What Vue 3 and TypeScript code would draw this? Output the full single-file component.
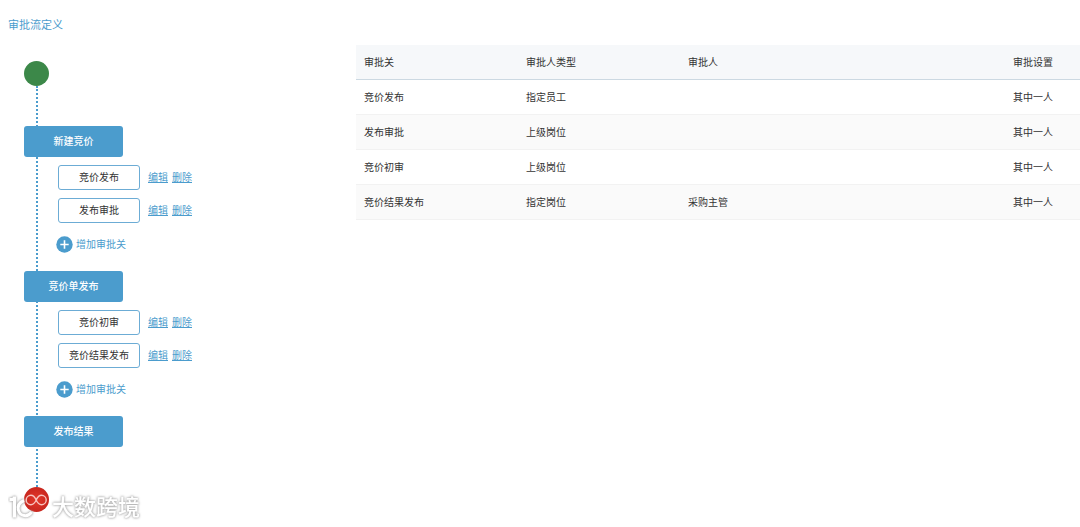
<script setup lang="ts">
interface Stage {
  name: string
  gates: string[]
}

interface Approval {
  gate: string
  type: string
  approver: string
  rule: string
}

const stages: Stage[] = [
  { name: '新建竞价', gates: ['竞价发布', '发布审批'] },
  { name: '竞价单发布', gates: ['竞价初审', '竞价结果发布'] },
  { name: '发布结果', gates: [] },
]

const approvals: Approval[] = [
  { gate: '竞价发布', type: '指定员工', approver: '', rule: '其中一人' },
  { gate: '发布审批', type: '上级岗位', approver: '', rule: '其中一人' },
  { gate: '竞价初审', type: '上级岗位', approver: '', rule: '其中一人' },
  { gate: '竞价结果发布', type: '指定岗位', approver: '采购主管', rule: '其中一人' },
]
</script>

<template>
  <main class="page">
    <h1 class="title">审批流定义</h1>
    <div class="content">
      <section class="flow">
        <span class="dot start"></span>
        <div class="track">
          <div v-for="stage in stages" :key="stage.name" class="stage">
            <button type="button" class="node">{{ stage.name }}</button>
            <template v-if="stage.gates.length">
              <ul class="gates">
                <li v-for="gate in stage.gates" :key="gate" class="gate">
                  <button type="button" class="gate-name">{{ gate }}</button>
                  <a href="#">编辑</a>
                  <a href="#">删除</a>
                </li>
              </ul>
              <button type="button" class="add">
                <svg width="17" height="17" viewBox="0 0 17 17" aria-hidden="true">
                  <circle cx="8.5" cy="8.5" r="8.2" fill="#4b9ccd" />
                  <path d="M8.5 4.3v8.4M4.3 8.5h8.4" stroke="#fff" stroke-width="1.6" />
                </svg>
                <span>增加审批关</span>
              </button>
            </template>
          </div>
        </div>
        <span class="dot end"></span>
      </section>

      <section class="list">
        <table>
          <colgroup>
            <col class="col" />
            <col class="col" />
            <col />
            <col class="col-rule" />
          </colgroup>
          <thead>
            <tr>
              <th>审批关</th>
              <th>审批人类型</th>
              <th>审批人</th>
              <th>审批设置</th>
            </tr>
          </thead>
          <tbody>
            <tr v-for="row in approvals" :key="row.gate">
              <td>{{ row.gate }}</td>
              <td>{{ row.type }}</td>
              <td>{{ row.approver }}</td>
              <td>{{ row.rule }}</td>
            </tr>
          </tbody>
        </table>
      </section>
    </div>

    <div class="watermark">
      <svg width="44" height="36" viewBox="0 0 44 36" fill="none" aria-hidden="true">
        <g class="glow" stroke="#fff" stroke-width="3">
          <path d="M1.5 13.5h2q3 0 3-3v21" />
          <path d="M16 14.5c-5 2-6.500 6-5.500 10 1.500 5.500 9.500 7.500 13 1.500" />
        </g>
        <path
          d="M28.200 14c-1.400-3.100-3-4.700-5.300-4.700a4.700 4.700 0 0 0 0 9.400c2.300 0 3.900-1.600 5.300-4.700s3-4.700 5.300-4.700a4.700 4.700 0 0 1 0 9.400c-2.300 0-3.900-1.600-5.300-4.700z"
          stroke="#f7c4bf"
          stroke-width="1.4"
        />
      </svg>
      <span class="glow">大数跨境</span>
    </div>
  </main>
</template>

<style>
body {
  margin: 0;
  background: #fff;
}
</style>

<style scoped>
.page {
  position: relative;
  box-sizing: border-box;
  min-height: 100vh;
  padding: 17px 0 16px;
  font: 10px/16px "Liberation Sans", "Noto Sans CJK SC", sans-serif;
  color: #333;
}

button {
  padding: 0;
  font: inherit;
  cursor: pointer;
}

.title {
  margin: 0 0 12px 8px;
  font-size: 11px;
  font-weight: 400;
  line-height: 16px;
  color: #4b9ccd;
}

.content {
  display: flex;
  align-items: flex-start;
}

.flow {
  flex: 0 0 356px;
  box-sizing: border-box;
  padding: 16px 0 0 24px;
}

.dot {
  display: block;
  width: 25px;
  height: 25px;
  border-radius: 50%;
}

.start {
  background: #3c8849;
}

.end {
  background: radial-gradient(circle, #dc3326 20%, #bd1f1a 100%);
}

.track {
  position: relative;
  display: flex;
  flex-direction: column;
  gap: 18px;
  padding: 40px 0;
}

.track::before {
  content: "";
  position: absolute;
  top: 0;
  bottom: 0;
  left: 12px;
  border-left: 2px dotted #4b9ccd;
}

.stage {
  position: relative;
}

.node {
  display: block;
  width: 99px;
  height: 31px;
  border: 0;
  border-radius: 3px;
  background: #4b9ccd;
  color: #fff;
  font-weight: 500;
}

.gates {
  display: flex;
  flex-direction: column;
  gap: 8px;
  margin: 8px 0 13px 34px;
  padding: 0;
  list-style: none;
}

.gate {
  display: flex;
  align-items: center;
  gap: 4px;
}

.gate-name {
  width: 82px;
  height: 25px;
  margin-right: 4px;
  border: 1px solid #6cacd5;
  border-radius: 3px;
  background: #fff;
  color: #333;
}

.gate a {
  color: #4b9ccd;
  text-decoration: underline;
}

.add {
  display: flex;
  align-items: center;
  gap: 3px;
  height: 17px;
  margin-left: 32px;
  border: 0;
  background: none;
  color: #4b9ccd;
}

.list {
  flex: 1;
  min-width: 0;
}

table {
  width: 100%;
  table-layout: fixed;
  border-collapse: separate;
  border-spacing: 0;
}

.col {
  width: 162px;
}

.col-rule {
  width: 75px;
}

th,
td {
  box-sizing: border-box;
  height: 35px;
  padding: 2px 8px 0;
  border-bottom: 1px solid #f2f2f2;
  text-align: left;
  font-weight: 400;
}

th {
  border-bottom-color: #ccd9e2;
  background: #f6f8fa;
}

tbody tr:nth-child(even) {
  background: #fafafa;
}

.watermark {
  position: absolute;
  top: 486px;
  left: 8px;
  display: flex;
  align-items: flex-start;
  pointer-events: none;
  font-size: 22px;
  font-weight: 500;
  line-height: 24px;
  color: #fff;
}

.watermark span {
  margin-top: 10px;
}

.glow {
  filter: drop-shadow(0 0 1px #aaa) drop-shadow(0 0 1px #ccc);
}
</style>
